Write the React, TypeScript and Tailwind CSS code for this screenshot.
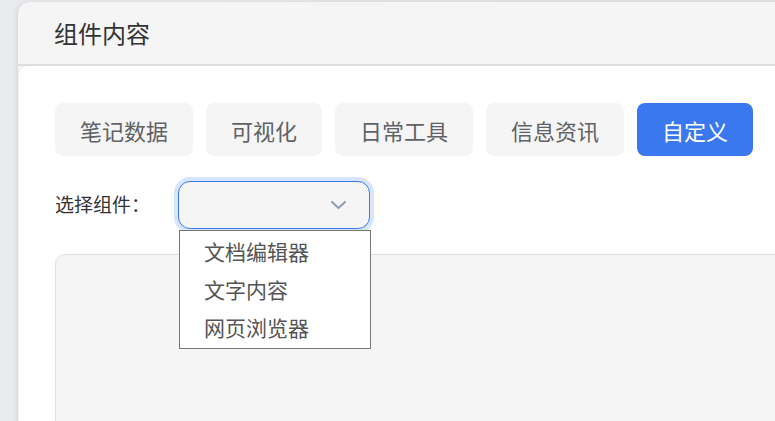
import React from "react";

const tabs = ["笔记数据", "可视化", "日常工具", "信息资讯", "自定义"];
const options = ["文档编辑器", "文字内容", "网页浏览器"];

export default function App() {
  return (
    <div
      className="h-[421px] w-full overflow-hidden bg-gradient-to-r from-[#e9ebee] to-[#dfe1e5] pl-[18px] pt-[2px]"
      style={{ fontFamily: '"Noto Sans CJK SC", "Noto Sans", sans-serif' }}
    >
      <div className="flex h-[440px] w-[820px] flex-col rounded-tl-[12px] bg-[#f5f5f5] shadow-[-2px_0_4px_rgba(0,0,0,0.08)]">
        {/* header */}
        <div className="flex h-[64px] shrink-0 items-center border-b-2 border-[#dedede] pl-[36px] text-[24px] leading-none text-[#333]">
          组件内容
        </div>

        {/* body */}
        <div className="ml-[1px] flex-1 rounded-tl-[10px] bg-white pl-[36px] pt-[37px]">
          <div className="flex gap-[13px]">
            {tabs.map((t) => (
              <div
                key={t}
                className={
                  t === "自定义"
                    ? "flex h-[53px] items-center rounded-[8px] bg-[#3a78f0] px-[25px] text-[22px] leading-none text-white"
                    : "flex h-[53px] items-center rounded-[8px] bg-[#f5f5f5] px-[25px] text-[22px] leading-none text-[#606266]"
                }
              >
                {t}
              </div>
            ))}
          </div>

          <div className="mt-[25px] flex items-center">
            <div className="mb-[4px] w-[123px] text-[19px] leading-none text-[#333]">选择组件：</div>
            <div className="relative">
              <div className="flex h-[48px] w-[192px] items-center justify-end rounded-[12px] border border-[#3a78f0] bg-[#f5f5f5] pr-[23px] shadow-[0_0_0_4px_#d7e5fd]">
                <svg width="15" height="8" viewBox="0 0 15 8" fill="none">
                  <path d="M1 1l6.5 6L14 1" stroke="#8f9bb3" strokeWidth="2" strokeLinecap="round" strokeLinejoin="round" />
                </svg>
              </div>
              <div className="absolute left-[1px] top-[49px] z-10 w-[192px] border border-[#777] bg-white pb-[2px] pt-[1px]">
                {options.map((o) => (
                  <div key={o} className="flex h-[38px] items-center pl-[24px] text-[21px] leading-none text-[#555]">
                    {o}
                  </div>
                ))}
              </div>
            </div>
          </div>

          <div className="mt-[25px] h-[200px] rounded-tl-[10px] border border-[#e0e0e0] bg-[#f5f5f5]" />
        </div>
      </div>
    </div>
  );
}
